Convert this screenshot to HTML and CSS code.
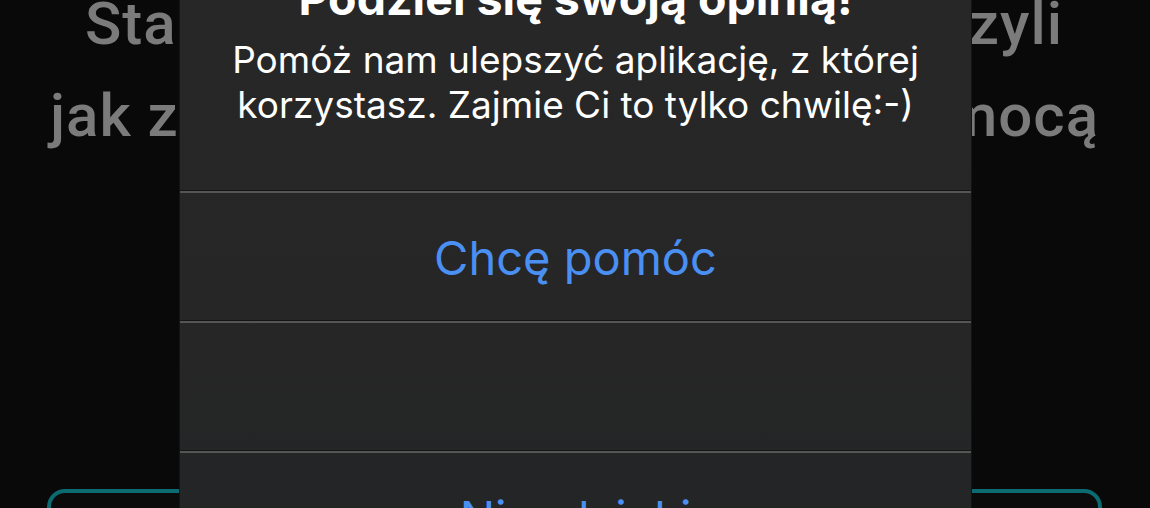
FILE: index.html
```html
<!DOCTYPE html>
<html lang="pl">
<head>
<meta charset="utf-8">
<title>Podziel się swoją opinią</title>
<link rel="stylesheet" href="styles.css">
</head>
<body>
<div class="page">
  <div class="bg-content">
    <div class="bg-line bg-line-1"><span>Stań się częścią</span><span>czyli</span></div>
    <div class="bg-line bg-line-2"><span>jak z nami</span><span>pomocą</span></div>
    <div class="bg-card"></div>
  </div>
  <div class="dialog">
    <div class="dialog-header">
      <div class="dialog-title">Podziel się swoją opinią!</div>
      <div class="dialog-message">Pomóż nam ulepszyć aplikację, z której<br>korzystasz. Zajmie Ci to tylko chwilę:-)</div>
    </div>
    <div class="dialog-row"><span class="action">Chcę pomóc</span></div>
    <div class="dialog-row"></div>
    <div class="dialog-row"><span class="action">Nie, dzięki</span></div>
  </div>
</div>
</body>
</html>
```
FILE: styles.css
```css
html, body {
  margin: 0;
  padding: 0;
  background: #090909;
}
.page {
  position: relative;
  width: 1150px;
  height: 508px;
  overflow: hidden;
  background: #090909;
  font-family: Roboto, "Noto Sans", sans-serif;
}
.bg-content {
  display: flex;
  flex-direction: column;
}
.bg-line {
  display: flex;
  justify-content: space-between;
  color: #7b7b7b;
  font-size: 60px;
  font-weight: 500;
  letter-spacing: 1px;
  height: 92px;
  line-height: 92px;
  flex-shrink: 0;
}
.bg-line-1 {
  margin-top: -22px;
  padding: 0 87px 0 85px;
}
.bg-line-2 {
  padding: 0 51px 0 50px;
}
.bg-card {
  flex-shrink: 0;
  margin: 327px 48px 0 47px;
  height: 80px;
  border: 4px solid #0b6b71;
  border-radius: 18px;
  background: #0b0b0b;
}
.dialog {
  position: absolute;
  left: 180px;
  top: 0;
  width: 791px;
  height: 600px;
  background: linear-gradient(180deg, #272727 0%, #262626 60%, #222526 100%);
  box-shadow: -1px 0 0 #141414, 1px 0 0 #141414;
  display: flex;
  flex-direction: column;
  color: #ffffff;
  text-align: center;
  font-family: Inter, Roboto, sans-serif;
}
.dialog-header {
  flex-shrink: 0;
  height: 191px;
  box-sizing: border-box;
}
.dialog-title {
  font-size: 46.5px;
  font-weight: 700;
  line-height: 50px;
  margin-top: -27px;
}
.dialog-message {
  font-size: 37px;
  line-height: 45px;
  margin-top: 14px;
}
.dialog-row {
  flex-shrink: 0;
  height: 130px;
  box-sizing: border-box;
  border-top: 2px solid #555555;
  box-shadow: 0 -1px 0 #151515;
  display: flex;
  align-items: center;
  justify-content: center;
}
.action {
  color: #4a8ff2;
  font-size: 47px;
}
```
